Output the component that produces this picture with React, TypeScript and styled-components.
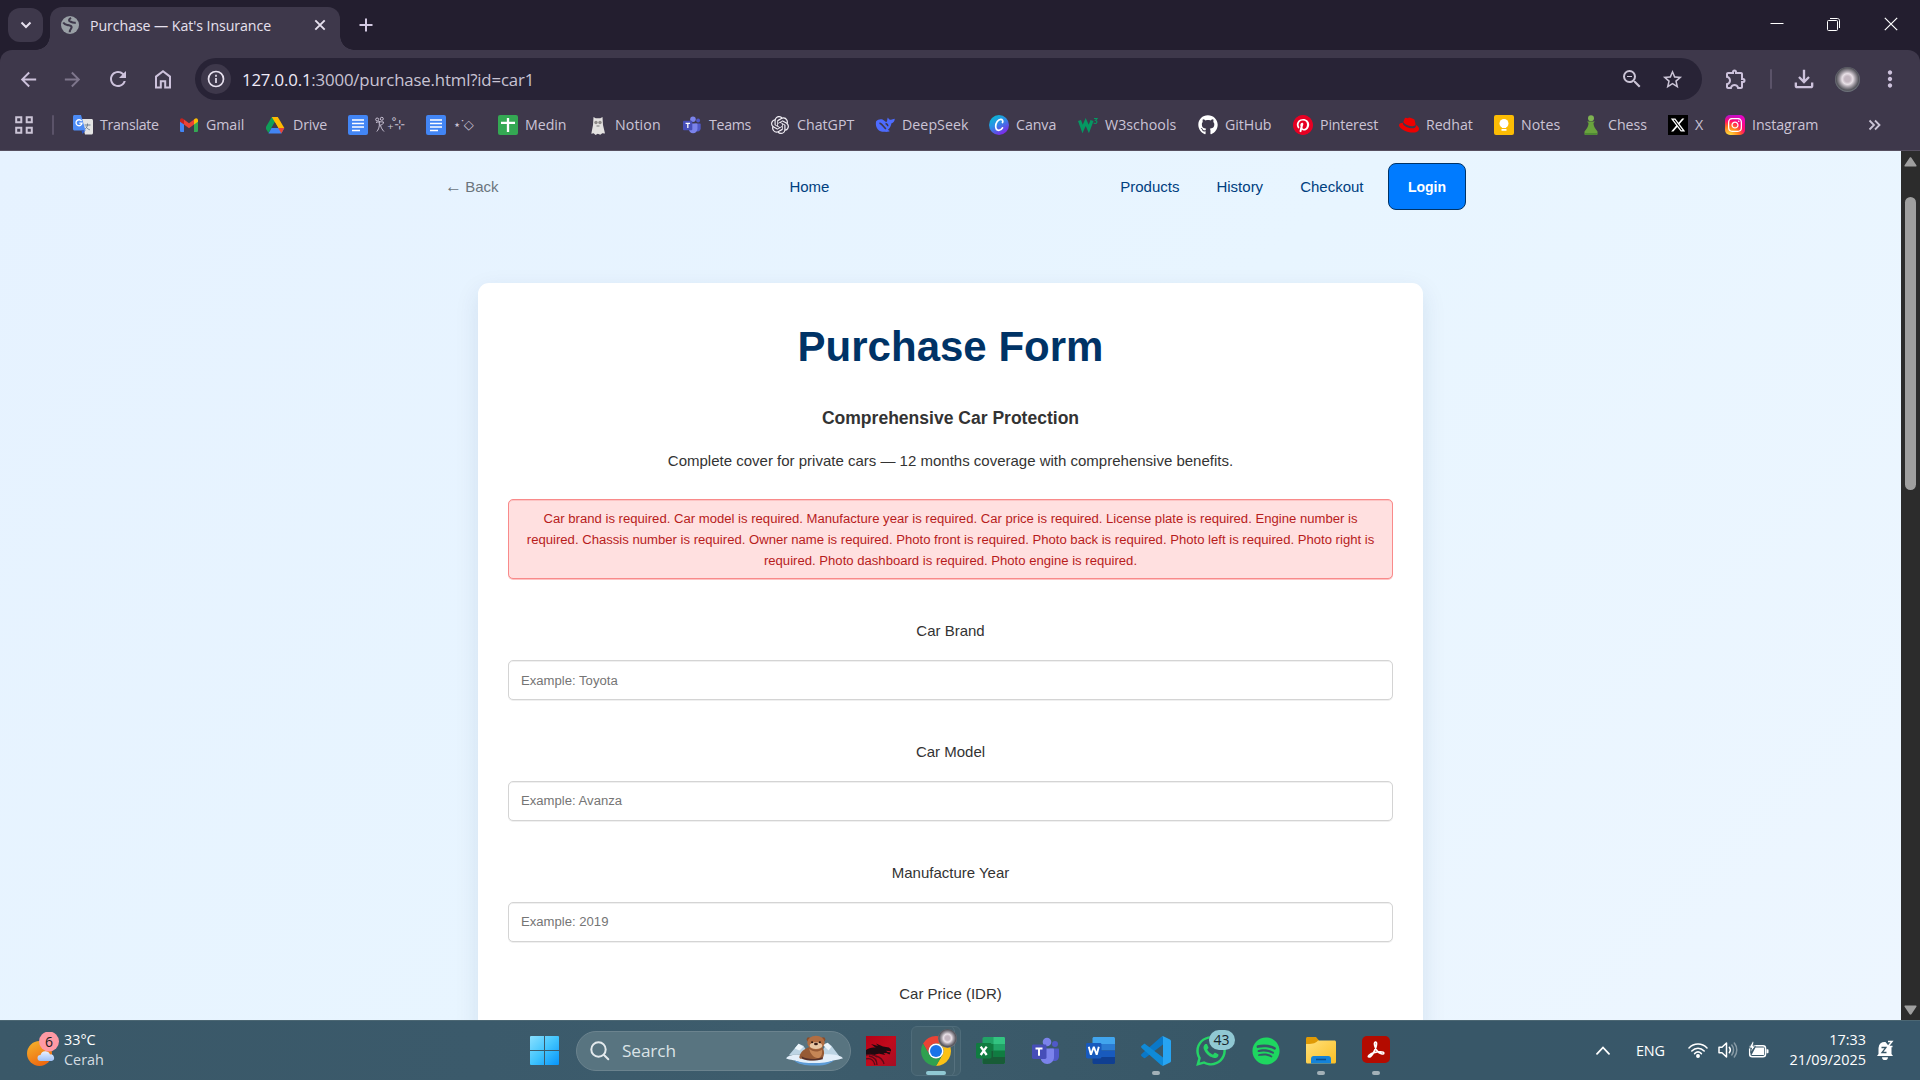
import React from "react";
import styled, { createGlobalStyle } from "styled-components";
import {
  MdArrowBack, MdArrowForward, MdRefresh, MdZoomOut, MdStarBorder,
  MdOutlineExtension, MdOutlineFileDownload, MdMoreVert,
} from "react-icons/md";
import { FaGithub, FaPinterest, FaRedhat, FaXTwitter, FaSpotify, FaWhatsapp, FaInstagram } from "react-icons/fa6";
import { SiOpenai } from "react-icons/si";

const UI = `"Open Sans", "Noto Sans", "DejaVu Sans", sans-serif`;
const PAGE = `"Liberation Sans", Arial, sans-serif`;

const Global = createGlobalStyle`
  * { box-sizing: border-box; }
  html, body { margin: 0; padding: 0; overflow: hidden; }
  svg { display: block; flex: none; }
`;

const Screen = styled.div`
  width: 1920px;
  height: 1080px;
  display: flex;
  flex-direction: column;
  overflow: hidden;
  background: #231e2f;
  font-family: ${UI};
`;

/* ---------- tab strip ---------- */
const TabStrip = styled.div`
  height: 50px;
  flex: none;
  display: flex;
  align-items: flex-start;
  padding-left: 8px;
`;
const TabSearch = styled.div`
  width: 35px;
  height: 34px;
  margin-top: 8px;
  border-radius: 12px;
  background: #3e384b;
  display: grid;
  place-items: center;
`;
const Tab = styled.div`
  position: relative;
  width: 290px;
  height: 43px;
  margin: 7px 0 0 7px;
  padding: 0 12px 7px 11px;
  display: flex;
  align-items: center;
  border-radius: 12px 12px 0 0;
  background: #3e384b;
  &::before, &::after {
    content: "";
    position: absolute;
    bottom: 0;
    width: 14px;
    height: 14px;
  }
  &::before { left: -14px; background: radial-gradient(circle at 0 0, transparent 13.5px, #3e384b 14px); }
  &::after { right: -14px; background: radial-gradient(circle at 100% 0, transparent 13.5px, #3e384b 14px); }
`;
const TabTitle = styled.span`
  margin-left: 11px;
  flex: 1;
  font-size: 14.2px;
  letter-spacing: -0.08px;
  color: #e6e0ee;
  white-space: nowrap;
`;
const NewTab = styled.div`
  margin: 17px 0 0 18px;
`;
const WindowButtons = styled.div`
  margin: 17px 22px 0 auto;
  display: flex;
  gap: 43px;
`;

/* ---------- toolbar ---------- */
const Toolbar = styled.div`
  height: 58px;
  flex: none;
  display: flex;
  align-items: center;
  padding-left: 6px;
  background: #3e384b;
  border-radius: 12px 12px 0 0;
  color: #cdc2dc;
`;
const ToolSlot = styled.div<{ $w: number; $dim?: boolean }>`
  width: ${(p) => p.$w}px;
  flex: none;
  display: grid;
  place-items: center;
  opacity: ${(p) => (p.$dim ? 0.45 : 1)};
`;
const Omnibox = styled.div`
  width: 1507px;
  flex: none;
  height: 42px;
  margin-left: 10px;
  border-radius: 21px;
  background: #282336;
  display: flex;
  align-items: center;
  padding: 0 10px 0 6px;
`;
const InfoChip = styled.div`
  width: 30px;
  height: 30px;
  border-radius: 50%;
  background: #3e384b;
  display: grid;
  place-items: center;
`;
const Url = styled.span`
  margin-left: 11px;
  flex: 1;
  font-size: 16.8px;
  letter-spacing: -0.16px;
  color: #c9c3d4;
  b { font-weight: 400; color: #f0ebf8; }
`;
const ToolDivider = styled.i<{ $h: number }>`
  width: 2px;
  flex: none;
  height: ${(p) => p.$h}px;
  border-radius: 1px;
  background: #5b5369;
`;
const Avatar = styled.div<{ $size: number }>`
  width: ${(p) => p.$size}px;
  height: ${(p) => p.$size}px;
  border-radius: 50%;
  background: radial-gradient(circle at 50% 48%, #c3b6c0 0 16%, #e8e0e6 30%, #a39da5 44%, #55555c 62%, #7f8791 76%);
`;

/* ---------- bookmarks ---------- */
const Bookmarks = styled.div`
  height: 43px;
  flex: none;
  display: flex;
  align-items: center;
  padding: 0 0 8px 15px;
  background: #3e384b;
  border-bottom: 1px solid #564f60;
`;
const AppsSlot = styled.div`
  width: 58px;
  display: flex;
  align-items: center;
  gap: 19px;
`;
const Bookmark = styled.div<{ $w: number }>`
  width: ${(p) => p.$w}px;
  flex: none;
  display: flex;
  align-items: center;
  gap: 7px;
`;
const BookmarkIcon = styled.div`
  width: 20px;
  height: 20px;
  display: grid;
  place-items: center;
`;
const BookmarkName = styled.span<{ $ls?: number }>`
  display: flex;
  align-items: center;
  font-size: 14.2px;
  line-height: 20px;
  letter-spacing: ${(p) => p.$ls ?? -0.05}px;
  white-space: nowrap;
  color: #cbc4d6;
`;
const Sprinkle = styled.span<{ $tight?: boolean }>`
  font: 13px/20px "DejaVu Sans", sans-serif;
  letter-spacing: ${(p) => (p.$tight ? -3 : -2)}px;
`;

/* ---------- web page ---------- */
const Viewport = styled.div`
  flex: 1;
  min-height: 0;
  display: flex;
  overflow: hidden;
`;
const Page = styled.main`
  width: 1901px;
  overflow: hidden;
  font-family: ${PAGE};
  font-size: 15px;
  line-height: 24px;
  color: #333;
  background: linear-gradient(135deg, #e6f2ff 0%, #e8f5ff 50%, #edf6ff 100%);
`;
const Nav = styled.nav`
  width: 1020px;
  height: 47px;
  margin: 12px 0 0 446px;
  display: flex;
  align-items: center;
  justify-content: space-between;
`;
const NavGroup = styled.div`
  display: flex;
  align-items: center;
  gap: 37px;
`;
const NavLink = styled.a<{ $muted?: boolean }>`
  color: ${(p) => (p.$muted ? "#6c757d" : "#004080")};
`;
const Arrow = styled.span`
  margin: 0 -1px 0 -1px;
  font-size: 17px;
  line-height: 0;
`;
const Login = styled.button`
  width: 78px;
  height: 47px;
  margin-left: -12.5px;
  padding: 0;
  border: 1px solid #003366;
  border-radius: 8px;
  background: #007bff;
  color: #fff;
  font: bold 14.06px ${PAGE};
`;
const Card = styled.section`
  width: 945px;
  height: 900px;
  margin: 73px auto 0;
  padding: 40px 30px 0;
  border-radius: 11px;
  background: #fff;
  box-shadow: 0 8px 24px rgba(0, 51, 102, 0.1);
  text-align: center;
`;
const Title = styled.h1`
  margin: 0;
  font-size: 42px;
  line-height: 48px;
  color: #003366;
`;
const Plan = styled.h3`
  margin: 33px 0 0;
  font-size: 17.55px;
  line-height: 28px;
`;
const Lead = styled.p`
  margin: 17px 0 0;
`;
const ErrorBox = styled.div`
  margin: 26px 0 40px;
  padding: 8px 14px 7px;
  border: 1px solid #f98a8a;
  border-radius: 5px;
  background: #ffe0e0;
  box-shadow: inset 0 1px #fcc4c4, 0 1px #fcc4c4;
  color: #b71c1c;
  font-size: 13.125px;
  line-height: 21px;
`;
const Input = styled.input`
  width: 100%;
  height: 40px;
  padding: 0 12px;
  border: 1px solid #d4d4d4;
  border-radius: 5px;
  outline: none;
  background: #fff;
  box-shadow: inset 0 1px #f0f0f0, 0 1px #f0f0f0;
  font: 13.125px ${PAGE};
  &::placeholder { color: #757575; opacity: 1; }
`;
const Field = styled.label`
  height: 121px;
  display: flex;
  flex-direction: column;
  gap: 17px;
  &:nth-of-type(n + 2) ${Input} { padding-bottom: 2px; }
`;
const Scrollbar = styled.div`
  width: 19px;
  background: #2c2c2c;
  display: flex;
  flex-direction: column;
  align-items: center;
  padding: 6px 0 5px;
`;
const Thumb = styled.div`
  width: 11px;
  height: 293px;
  margin: 30px 0 auto;
  border-radius: 6px;
  background: #9f9f9f;
`;

/* ---------- taskbar ---------- */
const Taskbar = styled.footer`
  height: 60px;
  flex: none;
  display: grid;
  grid-template-columns: 517px 1fr auto;
  align-items: stretch;
  border-top: 1px solid #4c6773;
  background: linear-gradient(90deg, #3a5868 0%, #3b5a6b 25%, #3d5c6c 40%, #385767 65%, #38576a 100%);
  color: #fff;
`;
const Weather = styled.div`
  display: flex;
  align-items: center;
  padding: 0 0 2px 25px;
  gap: 4px;
`;
const TwoLines = styled.div<{ $w?: number }>`
  width: ${(p) => (p.$w ? `${p.$w}px` : "auto")};
  font-size: 14.4px;
  line-height: 20px;
  text-align: ${(p) => (p.$w ? "right" : "left")};
  white-space: nowrap;
`;
const Soft = styled.div`
  color: #d3dce1;
`;
const Apps = styled.div`
  display: flex;
  align-items: center;
`;
const SearchPill = styled.div`
  width: 275px;
  height: 40px;
  margin: 0 2px 0 4px;
  padding: 0 6px 0 13px;
  display: flex;
  align-items: center;
  border: 1px solid #6b838e;
  border-radius: 20px;
  background: #587480;
  font-size: 17.2px;
  letter-spacing: -0.1px;
  color: #dbe3e7;
  span { flex: 1; margin-left: 12px; }
`;
const AppSlot = styled.div`
  position: relative;
  width: 55px;
  height: 50px;
  flex: none;
  display: grid;
  place-items: center;
`;
const ActiveFrame = styled.div`
  position: absolute;
  inset: 0 2px 0 3px;
  border: 1px solid #4f6c7a;
  border-radius: 6px;
  background: #43606d;
  &::after {
    content: "";
    position: absolute;
    inset: -1px 5px -1px auto;
    width: 6px;
    border-right: 1px solid #56717e;
    border-radius: 0 6px 6px 0;
  }
`;
const AppArt = styled.div`
  position: relative;
  width: 30px;
  height: 30px;
  display: flex;
  align-items: center;
  justify-content: center;
`;
const RunMark = styled.i<{ $active?: boolean }>`
  position: absolute;
  bottom: 1px;
  left: 50%;
  transform: translateX(-50%);
  width: ${(p) => (p.$active ? 20 : 8)}px;
  height: 4px;
  border-radius: 2px;
  background: ${(p) => (p.$active ? "#90c8d3" : "#a3b1b8")};
`;
const ProfileBadge = styled.div`
  position: absolute;
  top: -7px;
  right: -6px;
`;
const CountBadge = styled.div`
  position: absolute;
  top: -6px;
  left: 13px;
  width: 26px;
  height: 20px;
  border-radius: 10px;
  background: #90c8d3;
  color: #16242b;
  font-size: 14px;
  line-height: 20px;
  text-align: center;
`;
const Tray = styled.div`
  display: flex;
  align-items: center;
  padding: 0 26px 1px 0;
`;
const Lang = styled.span`
  width: 28px;
  margin: 0 24px 0 26px;
  font-size: 14.4px;
  letter-spacing: -0.2px;
  white-space: nowrap;
`;
const Status = styled.div`
  display: flex;
  align-items: center;
  gap: 10px;
`;

/* ---------- icons ---------- */
const Globe = () => (
  <svg width="18" height="18" viewBox="0 0 18 18">
    <circle cx="9" cy="9" r="9" fill="#9aa0a6" />
    <path d="M2.200 6.500c1.600 2.300 3.200 2.300 4.600 2.600 2 .4 3.800.2 3.800 2.200 0 1.600-2 1.700-1.900 4.900M10 1.800C8 3 7.300 4.500 9 5.400c1.500.7 2.700 1.800 5.800 1.300" fill="none" stroke="#3e384b" strokeWidth="2.100" />
  </svg>
);
const Home = () => (
  <svg width="18" height="20" viewBox="0 0 18 20" fill="none" stroke="currentColor" strokeWidth="2">
    <path d="M2 18.500V7.600L9 2.200l7 5.400v10.900h-4.800v-6.300H6.800v6.300z" />
  </svg>
);
const Translate = () => (
  <svg width="20" height="20" viewBox="0 0 20 20">
    <path d="M8 4h10.500c.8 0 1.500.7 1.500 1.500v12.500c0 .8-.7 1.500-1.500 1.500H12z" fill="#e4e4e4" />
    <path d="M11.500 10h6M14.500 8.500V10c-.3 2-1.500 3.500-3 4.500M13 11.500c.6 1.500 2 2.800 3.800 3.300" fill="none" stroke="#6d7f93" />
    <path d="M1.500 0H8l4.500 15.500H1.500C.7 15.500 0 14.800 0 14V1.500C0 .7.7 0 1.500 0z" fill="#4c8bf5" />
    <path d="M8.500 15.500h4L9.500 19z" fill="#2a56c6" />
    <path d="M8.600 6.200A3 3 0 1 0 9 8.200H6.300" fill="none" stroke="#fff" strokeWidth="1.300" />
  </svg>
);
const Gmail = () => (
  <svg width="18" height="14" viewBox="0 0 18 14">
    <path d="M0 2.500 4 5.500V14H1.300C.6 14 0 13.400 0 12.700z" fill="#4285f4" />
    <path d="M18 2.500 14 5.500V14h2.700c.7 0 1.300-.6 1.300-1.300z" fill="#34a853" />
    <path d="M4 1.500 9 5.200l5-3.700v5L9 10.300 4 6.500z" fill="#ea4335" />
    <path d="M0 2.200C0 .3 2-.6 3.400.9L4 1.500v5L0 3.700z" fill="#c5221f" />
    <path d="M18 2.200C18 .3 16-.6 14.600.9l-.6.600v5l4-2.800z" fill="#fbbc04" />
  </svg>
);
const Drive = () => (
  <svg width="20" height="17" viewBox="0.700 0 20 17">
    <path d="M6.500 0h6L6 11.300 3.200 16 0 11z" fill="#0f9d58" />
    <path d="M6.500 0h6L19 11h-6z" fill="#ffba00" />
    <path d="M6.200 11H19l-3 5.500H3.200z" fill="#4285f4" />
    <path d="M13 11h6l-3 5.500z" fill="#ea4335" />
    <path d="M9.500 5.300 12.800 11H6.200z" fill="#3e384b" />
  </svg>
);
const Docs = () => (
  <svg width="20" height="20" viewBox="0 0 20 20">
    <rect width="20" height="20" rx="2" fill="#4285f4" />
    <path d="M4 5h12M4 8.500h12M4 12h12M4 15.500h8" stroke="#fff" strokeWidth="1.700" />
  </svg>
);
const Sheets = () => (
  <svg width="20" height="20" viewBox="0 0 20 20">
    <rect width="20" height="20" rx="2" fill="#34a853" />
    <path d="M10 3v14M3 7.800h14" stroke="#fff" strokeWidth="2.300" />
  </svg>
);
const Ghost = () => (
  <svg width="16" height="19" viewBox="0 0 16 19">
    <path d="M3.500 1l2.200 1.300h4.600L12.500 1l.5 8L15 17.500l-2.700-.3-2 1.500-2.500-1L5.500 19l-1.800-1.700-2.400.4L3 9z" fill="#e3e1e0" />
    <circle cx="6" cy="6.500" r="1.700" fill="#8e8a88" /><circle cx="10" cy="6.500" r="1.700" fill="#8e8a88" />
    <path d="M6.500 10h3" stroke="#777" />
  </svg>
);
const TeamsIcon = ({ size, shift = 0 }: { size: number; shift?: number }) => (
  <svg width={size} height={size} viewBox={`${shift} 0 28 28`}>
    <circle cx="23.500" cy="7" r="3" fill="#5059c9" />
    <path d="M18 11.500h8.500c.6 0 1 .4 1 1V19c0 3-2 5-4.500 5s-5-2-5-5z" fill="#5059c9" />
    <circle cx="15.500" cy="5" r="4.300" fill="#7b83eb" />
    <path d="M9 11.500h12.500c.6 0 1 .5 1 1V20c0 4-3 7-6.800 7S9 24 9 20z" fill="#7b83eb" />
    <rect x={shift} y="7.500" width="14.500" height="14.500" rx="1.400" fill="#464eb8" />
    <path d="M4 11.500h7M7.500 11.500v7.300" stroke="#fff" strokeWidth="2" />
  </svg>
);
const DeepSeek = () => (
  <svg width="20" height="16" viewBox="0 0 20 16">
    <path d="M1 4.500C3 2 7 1.500 9 3.500c1.500 1.500 2.500 1.800 3 .8C12.500 3 12 1.500 13 .500c.5 1.600 1.500 2.300 3 2.300 1.300 0 2.200-.8 3.800-1-.2 2.400-1.300 4-3.300 4.500-.6 3-1.700 5-3.500 6.500.5.700 1.200 1 2 1.200-2.500 1.300-4.500.8-6 .8C4 14.800 0 11.500 1 4.500z" fill="#4d6bfe" />
    <path d="M4.500 6c3 1 4.500 4.500 6.500 6M10.500 6.500c1.500.3 2.300 1.500 2.300 2.800" fill="none" stroke="#3e384b" strokeWidth="1.500" />
  </svg>
);
const Canva = () => (
  <svg width="20" height="20" viewBox="0 0 20 20">
    <defs>
      <linearGradient id="canva" x1="0" y1="0" x2=".6" y2="1">
        <stop offset="0" stopColor="#00c4cc" /><stop offset=".5" stopColor="#2a8fe6" /><stop offset="1" stopColor="#7d2ae8" />
      </linearGradient>
    </defs>
    <circle cx="10" cy="10" r="10" fill="url(#canva)" />
    <path d="M13.500 7.500c.8-1.500 0-3.200-1.800-3.200-2.600 0-5 3.500-5 7 0 2.400 1.200 4 3 4 1.700 0 3-1 3.800-2.500" fill="none" stroke="#fff" strokeWidth="1.700" strokeLinecap="round" />
  </svg>
);
const W3 = () => (
  <svg width="20" height="16" viewBox="0 0 20 16" fill="none" stroke="#059862">
    <path d="M1.500 3.500 4.600 12 7.700 5l3.100 7L14 3.500" strokeWidth="3.200" />
    <path d="M16 1.500h3l-1.500 2c2 .2 1.800 3-.2 3-.8 0-1.200-.3-1.500-.8" strokeWidth="1.200" />
  </svg>
);
const Keep = () => (
  <svg width="20" height="20" viewBox="0 0 20 20">
    <rect width="20" height="20" rx="2" fill="#fbbc04" />
    <circle cx="10" cy="8.500" r="4.500" fill="#fff" />
    <path d="M8 11h4v2H8zM7.500 14h5v1.700h-5z" fill="#fff" />
  </svg>
);
const Pawn = () => (
  <svg width="14" height="20" viewBox="0 0 14 20">
    <circle cx="7" cy="3.200" r="3" fill="#7fb352" />
    <path d="M3 6.500h8L9.500 8c0 3 1 5 4 8.500V19c0 .6-.4 1-1 1H1.500c-.6 0-1-.4-1-1v-2.500C3.500 13 4.500 11 4.500 8z" fill="#69a33d" />
    <path d="M1 18h12v1c0 .6-.4 1-1 1H2c-.6 0-1-.4-1-1z" fill="#4f8a35" />
  </svg>
);
const XBox = styled.div`
  width: 20px;
  height: 20px;
  background: #000;
  color: #fff;
  display: grid;
  place-items: center;
`;
const InstaBox = styled.div`
  width: 20px;
  height: 20px;
  border-radius: 5px;
  color: #fff;
  display: grid;
  place-items: center;
  background: radial-gradient(circle at 20% 110%, #ffd23a 0 12%, #ff7a1a 38%, #ff0a6c 60%, transparent 85%),
    linear-gradient(90deg, #8a1cf5, #f303b8);
`;
const PinDisc = styled.div`
  width: 20px;
  height: 20px;
  border-radius: 50%;
  background: radial-gradient(circle, #fff 0 7px, #e60023 8px);
  color: #e60023;
`;
const Ornament = () => (
  <svg width="12" height="18" viewBox="0 0 12 18" fill="none" stroke="#cbc4d6">
    <circle cx="2.200" cy="3.500" r="1.500" /><circle cx="6.800" cy="2.800" r="1.500" />
    <path d="M1 6.500c2-.8 5-.8 7.500-.5 0 2-1.500 3-4 3.300M4.300 5v4.500C4 12 3.300 13.800 1.800 15.500M5.500 9.500c.8 2.500 1.800 4.300 3.500 6" />
  </svg>
);
const WindowsLogo = () => (
  <svg width="29" height="29" viewBox="0 0 29 29">
    <defs>
      <linearGradient id="win" x1="0" y1="0" x2="1" y2="1">
        <stop offset="0" stopColor="#8ae0ff" /><stop offset=".5" stopColor="#41c4fd" /><stop offset="1" stopColor="#0694fb" />
      </linearGradient>
    </defs>
    <path d="M1 0h13v14H0V1a1 1 0 0 1 1-1zM15 0h13a1 1 0 0 1 1 1v13H15zM0 15h14v14H1a1 1 0 0 1-1-1zM15 15h14v13a1 1 0 0 1-1 1H15z" fill="url(#win)" />
  </svg>
);
const Otter = () => (
  <svg width="58" height="31" viewBox="0 0 60 32">
    <path d="M3 21 13 9l5 2 5 8zM35 20l8-12 4 3 9 12z" fill="#bcd4e4" />
    <path d="M38 10l5-2 4 4-3 4zM9 14l4-5 5 3-4 4z" fill="#eef6fb" />
    <path d="M0 24c4-5 12-3 20-5 10-2 14 0 20 1 7 0 15 0 19 4-6 2-12 2-17 5-8 2-20 2-26 0C11 26 4 26 0 24z" fill="#e3effa" />
    <path d="M8 26c12 4 30 4 42 0-6 5-12 5.500-21 5.500S12 30 8 26z" fill="#5c9bd6" />
    <path d="M14 22c1-5 5-8 11-10h12c3 3 3 8 1 12-6 3-14 2-20 1-3 0-5-1-4-3z" fill="#965a35" />
    <path d="M24 14c3 4 10 4 13 1 1 4 0 7-3 9-5 0-9-4-10-10z" fill="#c58656" />
    <path d="M16 22c5 3 14 4 22 1v2c-7 2-16 2-21-.5z" fill="#54302a" />
    <circle cx="23.500" cy="4.500" r="2.200" fill="#8a4e2c" /><circle cx="38.500" cy="4.500" r="2.200" fill="#8a4e2c" />
    <ellipse cx="31" cy="8" rx="9" ry="7.300" fill="#b26e42" />
    <ellipse cx="31" cy="11" rx="6.500" ry="3.500" fill="#e8c7a4" />
    <circle cx="27" cy="7.500" r="1.100" fill="#2a1712" /><circle cx="35" cy="7.500" r="1.100" fill="#2a1712" />
    <ellipse cx="31" cy="9.300" rx="2" ry="1.300" fill="#3a1e18" />
  </svg>
);
const Dragon = () => (
  <svg width="30" height="30" viewBox="0 0 30 30">
    <defs>
      <linearGradient id="drg" x1="0" y1="0" x2="1" y2="1"><stop offset="0" stopColor="#b50016" /><stop offset=".5" stopColor="#c30a1c" /><stop offset="1" stopColor="#a40d25" /></linearGradient>
    </defs>
    <rect width="30" height="30" fill="url(#drg)" />
    <path d="M0 14c3-2 7-3 10-2l-5-4 7 2-2-2.500 7 3 6 1 2 2v2l-2-.5-3-.3 1.500 1.300 3 .5-1 2-3-1.500-3 .3 2 1.700-5-1c-3-.6-5 .4-6 1.500-3-1-6-1.200-8.500-.2z" fill="#1f0a10" />
    <path d="M0 19c5-1.500 9 0 11 2M0 23c4-1.500 8 1 9 6M3 20c5 1 8 4 8 9M10 20c4 1 7 4 8 8" fill="none" stroke="#5a0a18" strokeWidth="1.300" />
  </svg>
);
const Chrome = () => (
  <svg width="30" height="30" viewBox="0 0 48 48">
    <path d="M24 12H44.780A24 24 0 0 0 3.220 12L13.600 30A12 12 0 0 1 24 12z" fill="#ea4335" />
    <path d="M34.390 30 24 48A24 24 0 0 0 44.780 12H24A12 12 0 0 1 34.390 30z" fill="#fbc116" />
    <path d="M13.600 30 3.220 12A24 24 0 0 0 24 48L34.390 30A12 12 0 0 1 13.600 30z" fill="#2fa14f" />
    <circle cx="24" cy="24" r="12" fill="#fff" />
    <circle cx="24" cy="24" r="9.600" fill="#1a73e8" />
  </svg>
);
const Excel = () => (
  <svg width="30" height="28" viewBox="0.500 0 30 28">
    <rect x="7" y="0" width="22.500" height="27" rx="1.500" fill="#21a366" />
    <path d="M18 0h10c.8 0 1.500.7 1.500 1.500V7H18z" fill="#33c481" />
    <path d="M7 7h11v6.500H7z" fill="#107c41" /><path d="M18 13.500h11.500V20H18z" fill="#107c41" />
    <path d="M7 13.500h11V20H7zM7 20h22.500v5.500c0 .8-.7 1.500-1.500 1.500H8.500C7.700 27 7 26.300 7 25.500z" fill="#185c37" />
    <rect x="0.500" y="6" width="15.500" height="15.500" rx="1.400" fill="#107c41" />
    <path d="M5.200 9.700l6 8.300M11.200 9.700l-6 8.300" stroke="#fff" strokeWidth="2.300" />
  </svg>
);
const Word = () => (
  <svg width="30" height="28" viewBox="0.500 0 30 28">
    <path d="M8.500 0H28c.8 0 1.500.7 1.500 1.500V7H7V1.500C7 .7 7.700 0 8.500 0z" fill="#41a5ee" />
    <path d="M7 7h22.500v6.500H7z" fill="#2b7cd3" /><path d="M7 13.500h22.500V20H7z" fill="#185abd" />
    <path d="M7 20h22.500v5.500c0 .8-.7 1.500-1.500 1.500H8.500C7.700 27 7 26.300 7 25.500z" fill="#103f91" />
    <rect x="0.500" y="6" width="15.500" height="15.500" rx="1.400" fill="#185abd" />
    <path d="M3.300 9.700l2.100 8 2.900-8 2.900 8 2.100-8" fill="none" stroke="#fff" strokeWidth="1.900" strokeLinejoin="bevel" />
  </svg>
);
const VSCode = () => (
  <svg width="30" height="30" viewBox="0 0 30 30">
    <path d="M22 .5v8L4.500 21.800c-.6.500-1.300.5-1.900 0L.6 20.200c-.7-.6-.7-1.500 0-2.100L20 .9z" fill="#0a78c8" />
    <path d="M22 29.500v-8L4.500 8.200c-.6-.5-1.300-.5-1.900 0L.6 9.800c-.7.600-.7 1.500 0 2.100L20 29.100z" fill="#0f8ad8" />
    <path d="M20.500.5c.6-.4 1.200-.4 1.800-.2L29 3.400c.6.300 1 .9 1 1.600v20c0 .7-.4 1.300-1 1.600l-6.700 3.100c-.6.200-1.200.2-1.800-.2.900.2 1.500-.3 1.500-1.300V1.800c0-1-.6-1.500-1.500-1.300z" fill="#27a4f2" />
  </svg>
);
const Folder = () => (
  <svg width="30" height="27" viewBox="0 0 30 27">
    <defs><linearGradient id="fld" x1="0" y1="0" x2="1" y2="1"><stop offset="0" stopColor="#ffe07a" /><stop offset="1" stopColor="#fbbf24" /></linearGradient></defs>
    <path d="M0 1.500C0 .7.700 0 1.500 0H10l3 3.500V9H0z" fill="#e09a05" />
    <path d="M0 7c5 0 9 0 12-3.500h16.500c.8 0 1.500.7 1.500 1.500v20c0 .8-.7 1.500-1.500 1.500h-27C.7 26.500 0 25.800 0 25z" fill="url(#fld)" />
    <path d="M5 26.500v-4.700C5 20.200 6 19 7.700 19h14.600c1.700 0 2.700 1.200 2.700 2.800v4.700z" fill="#1583d8" />
    <path d="M10 22.500h10" stroke="#0b4f8f" strokeWidth="1.500" />
  </svg>
);
const Acrobat = () => (
  <svg width="28" height="30" viewBox="0 0 28 30">
    <rect width="28" height="27" rx="5" fill="#b30b00" />
    <path d="M13.300 6c1.800-.3 1.300 3 .5 5.500C12.500 15.500 9.500 21 7.200 21c-2.400 0 .4-3.200 4.800-4.400 4-1.100 9.800-1.300 9.800.5 0 2-4.300.4-6.500-2-2-2.200-4-8.700-2-9.100z" fill="none" stroke="#fff" strokeWidth="1.700" />
  </svg>
);
const WeatherIcon = () => (
  <svg width="35" height="36" viewBox="0 0 35 36">
    <defs>
      <linearGradient id="sun" x1="0" y1="0" x2=".5" y2="1"><stop offset="0" stopColor="#f5b62d" /><stop offset="1" stopColor="#ee6a10" /></linearGradient>
      <linearGradient id="cld" x1="0" y1="0" x2="0" y2="1"><stop offset="0" stopColor="#e8f1ff" /><stop offset="1" stopColor="#9fc0f5" /></linearGradient>
    </defs>
    <circle cx="14.500" cy="21.500" r="12.500" fill="url(#sun)" />
    <path d="M15.500 29a3 3 0 0 1 0-6 5 5 0 0 1 9.500-.5 3.300 3.300 0 0 1 1.500 6.500z" fill="url(#cld)" />
    <circle cx="24" cy="9.500" r="10" fill="#ff99a4" />
    <text x="24" y="14.500" fontSize="14" textAnchor="middle" fill="#1b1b1b" fontFamily="Open Sans, sans-serif">6</text>
  </svg>
);
const Wifi = () => (
  <svg width="20" height="16" viewBox="0 0 20 16" fill="none" stroke="#fff" strokeWidth="1.500" strokeLinecap="round">
    <path d="M1 6c5-5.300 13-5.300 18 0M3.800 8.900c3.500-3.700 8.900-3.700 12.400 0M6.600 11.600c2-2 4.800-2 6.800 0" />
    <circle cx="10" cy="14" r="1.200" fill="#fff" />
  </svg>
);
const Volume = () => (
  <svg width="20" height="18" viewBox="0 0 20 18" fill="none" stroke="#fff" strokeWidth="1.500" strokeLinecap="round" strokeLinejoin="round">
    <path d="M1 6.200h3L8.500 2v14L4 11.800H1z" />
    <path d="M11.300 6.300c1.200 1.500 1.200 3.900 0 5.400" />
    <path d="M13.800 4c2.300 2.800 2.300 7.200 0 10M16.300 2c3.300 4 3.300 10 0 14" opacity=".4" />
  </svg>
);
const Battery = () => (
  <svg width="21" height="18" viewBox="0 0 21 18">
    <rect x="1.700" y="4.700" width="15.800" height="11" rx="2.500" fill="none" stroke="#fff" strokeWidth="1.500" />
    <path d="M18.500 8.200h1c.7 0 1 .4 1 1v2c0 .6-.3 1-1 1h-1z" fill="#fff" />
    <path d="M3.500 14 7.500 6.500H16V14z" fill="#fff" />
    <path d="M4.500.5 1 7h2.500L2.500 11.500 7.500 5H5L6 .5z" fill="#fff" stroke="#385767" strokeWidth=".8" />
  </svg>
);
const Bell = () => (
  <svg width="18" height="20" viewBox="0 0 18 20">
    <path d="M2.500 14V8a6 6 0 0 1 7-6l4 5h2v7l1.500 2H1z" fill="#fff" />
    <path d="M6 17.200h6a3 3 0 0 1-6 0z" fill="#fff" />
    <path d="M5.500 7.500H10l-4 5h4.500" fill="none" stroke="#385767" strokeWidth="1.300" />
    <path d="M12 1.500h4L12 6.500h4.500" fill="none" stroke="#fff" strokeWidth="1.500" />
  </svg>
);

const BOOKMARKS: { w: number; icon: React.ReactNode; name: React.ReactNode; ls?: number }[] = [
  { w: 106, icon: <Translate />, name: "Translate", ls: -0.3 },
  { w: 87, icon: <Gmail />, name: "Gmail" },
  { w: 82, icon: <Drive />, name: "Drive", ls: -0.15 },
  { w: 78, icon: <Docs />, name: <><Ornament /><Sprinkle $tight>₊˚⊹</Sprinkle></> },
  { w: 72, icon: <Docs />, name: <Sprinkle>⋆˙◇</Sprinkle> },
  { w: 90, icon: <Sheets />, name: "Medin" },
  { w: 94, icon: <Ghost />, name: "Notion", ls: 0.1 },
  { w: 88, icon: <TeamsIcon size={18} />, name: "Teams", ls: -0.3 },
  { w: 105, icon: <SiOpenai size={18} color="#f1eef5" />, name: "ChatGPT", ls: 0 },
  { w: 114, icon: <DeepSeek />, name: "DeepSeek", ls: 0.05 },
  { w: 89, icon: <Canva />, name: "Canva" },
  { w: 120, icon: <W3 />, name: "W3schools", ls: 0.05 },
  { w: 95, icon: <FaGithub size={20} color="#fff" />, name: "GitHub" },
  { w: 106, icon: <PinDisc><FaPinterest size={20} /></PinDisc>, name: "Pinterest", ls: -0.15 },
  { w: 95, icon: <FaRedhat size={20} color="#e00" />, name: "Redhat" },
  { w: 87, icon: <Keep />, name: "Notes", ls: 0.05 },
  { w: 87, icon: <Pawn />, name: "Chess" },
  { w: 57, icon: <XBox><FaXTwitter size={16} /></XBox>, name: "X" },
  { w: 143, icon: <InstaBox><FaInstagram size={16} /></InstaBox>, name: "Instagram" },
];

const FIELDS = [
  ["Car Brand", "Example: Toyota"],
  ["Car Model", "Example: Avanza"],
  ["Manufacture Year", "Example: 2019"],
  ["Car Price (IDR)", "Example: 250000000"],
];

const TASKS: { art: React.ReactNode; running?: boolean; active?: boolean }[] = [
  { art: <Dragon /> },
  { art: <><Chrome /><ProfileBadge><Avatar $size={19} /></ProfileBadge></>, running: true, active: true },
  { art: <Excel /> },
  { art: <TeamsIcon size={28} shift={0.5} /> },
  { art: <Word /> },
  { art: <VSCode />, running: true },
  { art: <><FaWhatsapp size={34} color="#25d366" /><CountBadge>43</CountBadge></> },
  { art: <FaSpotify size={28} color="#1ed760" /> },
  { art: <Folder />, running: true },
  { art: <Acrobat />, running: true },
];

export default function App() {
  return (
    <Screen>
      <Global />
      <TabStrip>
        <TabSearch>
          <svg width="12" height="8" viewBox="0 0 12 8" fill="none" stroke="#e6e0ee" strokeWidth="2"><path d="M1.500 1.500 6 6l4.500-4.500" /></svg>
        </TabSearch>
        <Tab>
          <Globe />
          <TabTitle>Purchase — Kat's Insurance</TabTitle>
          <svg width="16" height="16" viewBox="0 0 16 16" stroke="#e6e0ee" strokeWidth="1.900"><path d="M3.300 3.300l9.400 9.400M12.700 3.300l-9.400 9.400" /></svg>
        </Tab>
        <NewTab>
          <svg width="16" height="16" viewBox="0 0 16 16" stroke="#d3c9e2" strokeWidth="2"><path d="M8 1.500v13M1.500 8h13" /></svg>
        </NewTab>
        <WindowButtons>
          <svg width="14" height="14" viewBox="0 0 14 14" stroke="#fff"><path d="M.5 6.500h13" /></svg>
          <svg width="14" height="14" viewBox="0 0 14 14" fill="none" stroke="#fff"><rect x=".5" y="3.500" width="10" height="10" rx="1" /><path d="M3 1.500h7.500c1 0 2 .9 2 2V11" /></svg>
          <svg width="14" height="14" viewBox="0 0 14 14" stroke="#fff" strokeWidth="1.200"><path d="M.8.8l12.400 12.400M13.200.8.8 13.200" /></svg>
        </WindowButtons>
      </TabStrip>

      <Toolbar>
        <ToolSlot $w={44}><MdArrowBack size={23} /></ToolSlot>
        <ToolSlot $w={45} $dim><MdArrowForward size={23} /></ToolSlot>
        <ToolSlot $w={45}><MdRefresh size={24} /></ToolSlot>
        <ToolSlot $w={45}><Home /></ToolSlot>
        <Omnibox>
          <InfoChip>
            <svg width="18" height="18" viewBox="0 0 18 18" fill="none" stroke="#e6e0ee" strokeWidth="1.700"><circle cx="9" cy="9" r="7.500" /><path d="M9 8v5M9 4.800v1.900" /></svg>
          </InfoChip>
          <Url><b>127.0.0.1</b>:3000/purchase.html?id=car1</Url>
          <ToolSlot $w={40}><MdZoomOut size={24} color="#cbc4d6" /></ToolSlot>
          <ToolSlot $w={40}><MdStarBorder size={23} color="#cbc4d6" /></ToolSlot>
        </Omnibox>
        <ToolSlot $w={68}><MdOutlineExtension size={24} /></ToolSlot>
        <ToolDivider $h={20} />
        <ToolSlot $w={63}><MdOutlineFileDownload size={28} /></ToolSlot>
        <ToolSlot $w={25}><Avatar $size={25} /></ToolSlot>
        <ToolSlot $w={60}><MdMoreVert size={26} /></ToolSlot>
      </Toolbar>

      <Bookmarks>
        <AppsSlot>
          <svg width="18" height="18" viewBox="0 0 18 18" fill="none" stroke="#cbc4d6" strokeWidth="2"><path d="M1.200 1.200h5.100v5.100H1.200zM11.700 1.200h5.100v5.100h-5.100zM1.200 11.700h5.100v5.100H1.200zM11.700 11.700h5.100v5.100h-5.100z" /></svg>
          <ToolDivider $h={20} />
        </AppsSlot>
        {BOOKMARKS.map((b, i) => (
          <Bookmark key={i} $w={b.w}>
            <BookmarkIcon>{b.icon}</BookmarkIcon>
            <BookmarkName $ls={b.ls}>{b.name}</BookmarkName>
          </Bookmark>
        ))}
        <svg width="13" height="12" viewBox="0 0 13 12" fill="none" stroke="#cbc4d6" strokeWidth="1.800"><path d="M1.500 1.500 6 6l-4.500 4.500M7 1.500 11.500 6 7 10.500" /></svg>
      </Bookmarks>

      <Viewport>
        <Page>
          <Nav>
            <NavLink $muted><Arrow>←</Arrow> Back</NavLink>
            <NavLink>Home</NavLink>
            <NavGroup>
              <NavLink>Products</NavLink>
              <NavLink>History</NavLink>
              <NavLink>Checkout</NavLink>
              <Login>Login</Login>
            </NavGroup>
          </Nav>
          <Card>
            <Title>Purchase Form</Title>
            <Plan>Comprehensive Car Protection</Plan>
            <Lead>Complete cover for private cars — 12 months coverage with comprehensive benefits.</Lead>
            <ErrorBox>
              Car brand is required. Car model is required. Manufacture year is required. Car price is required. License
              plate is required. Engine number is required. Chassis number is required. Owner name is required. Photo
              front is required. Photo back is required. Photo left is required. Photo right is required. Photo
              dashboard is required. Photo engine is required.
            </ErrorBox>
            {FIELDS.map(([label, hint]) => (
              <Field key={label}>
                {label}
                <Input placeholder={hint} />
              </Field>
            ))}
          </Card>
        </Page>
        <Scrollbar>
          <svg width="13" height="10" viewBox="0 0 13 10" fill="#9f9f9f"><path d="M5.600.8 .6 8.200c-.4.700 0 1.300.7 1.300h10.400c.7 0 1.100-.6.7-1.300L7.400.8c-.5-.6-1.300-.6-1.800 0z" /></svg>
          <Thumb />
          <svg width="13" height="10" viewBox="0 0 13 10" fill="#9f9f9f"><path d="M5.600 9.200.6 1.800C.2 1.100.6.5 1.300.5h10.400c.7 0 1.100.6.700 1.300L7.400 9.200c-.5.6-1.300.6-1.800 0z" /></svg>
        </Scrollbar>
      </Viewport>

      <Taskbar>
        <Weather>
          <WeatherIcon />
          <TwoLines>
            <div>33°C</div>
            <Soft>Cerah</Soft>
          </TwoLines>
        </Weather>
        <Apps>
          <AppSlot><WindowsLogo /></AppSlot>
          <SearchPill>
            <svg width="20" height="20" viewBox="0 0 20 20" fill="none" stroke="#e4eaed" strokeWidth="2" strokeLinecap="round"><circle cx="8.500" cy="8.500" r="7.200" /><path d="M14 14l4.300 4.300" /></svg>
            <span>Search</span>
            <Otter />
          </SearchPill>
          {TASKS.map((t, i) => (
            <AppSlot key={i}>
              {t.active && <ActiveFrame />}
              <AppArt>{t.art}</AppArt>
              {t.running && <RunMark $active={t.active} />}
            </AppSlot>
          ))}
        </Apps>
        <Tray>
          <svg width="14" height="9" viewBox="0 0 14 9" fill="none" stroke="#fff" strokeWidth="1.800" strokeLinecap="round"><path d="M1 7.800 7 1.500l6 6.300" /></svg>
          <Lang>ENG</Lang>
          <Status>
            <Wifi />
            <Volume />
            <Battery />
          </Status>
          <TwoLines $w={97}>
            <div>17:33</div>
            <div>21/09/2025</div>
          </TwoLines>
          <svg width="10" height="1" />
          <Bell />
        </Tray>
      </Taskbar>
    </Screen>
  );
}
